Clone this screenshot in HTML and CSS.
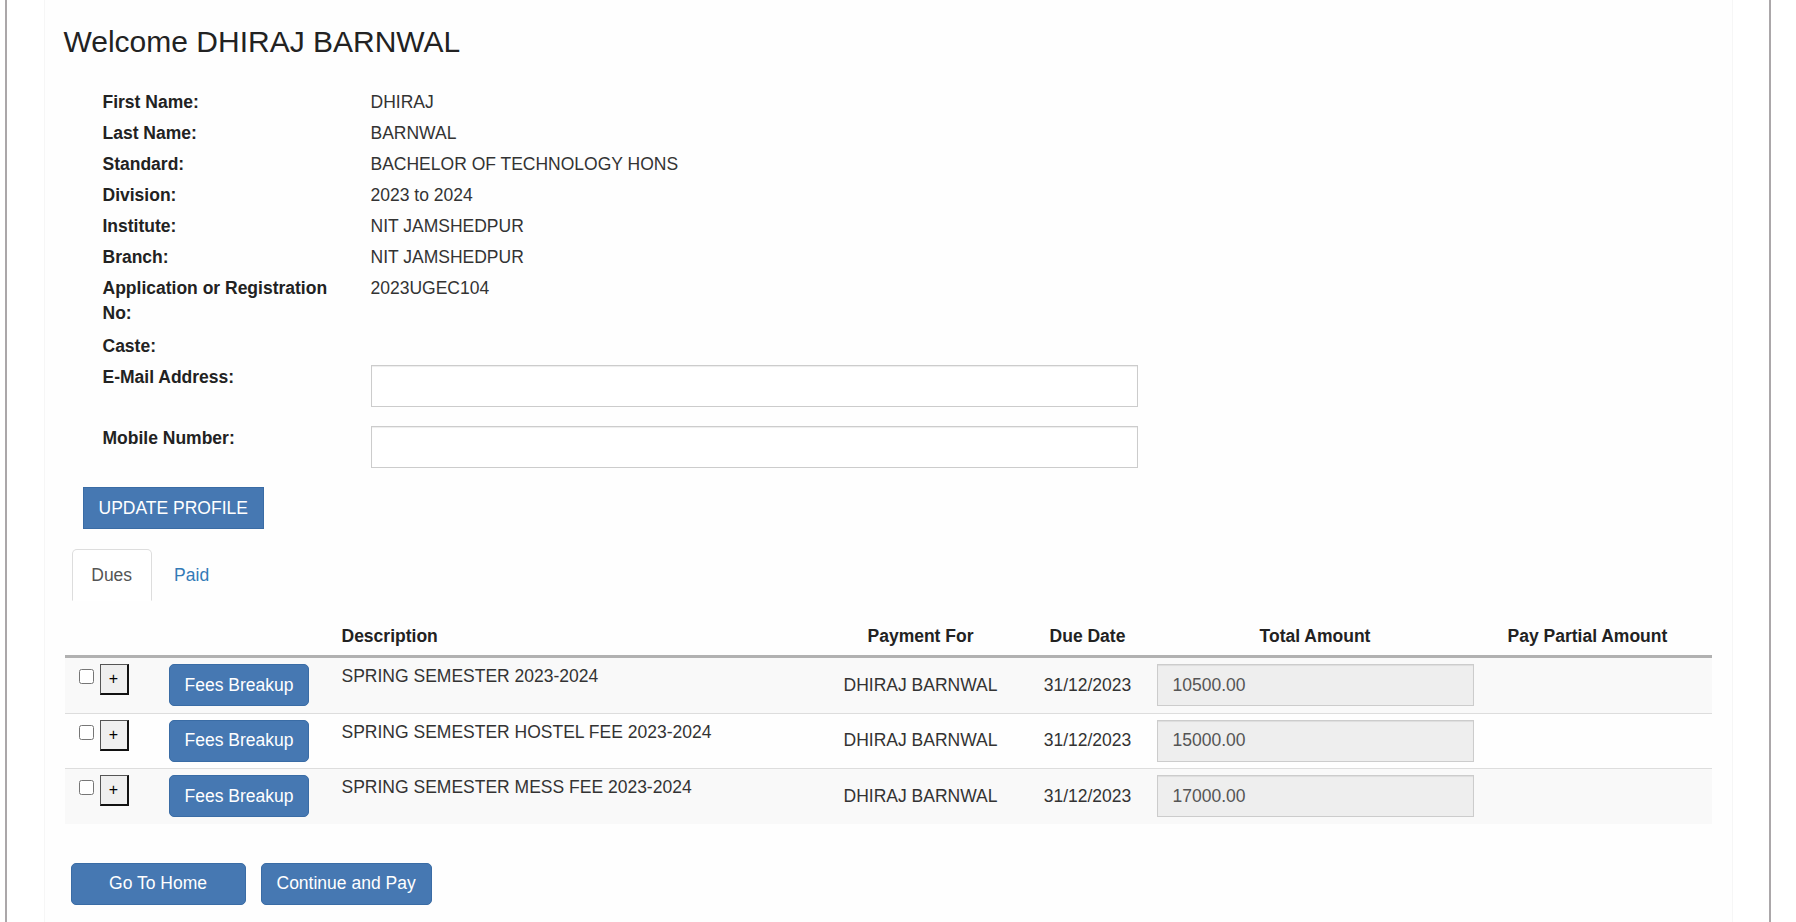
FILE: index.html
```html
<!DOCTYPE html>
<html lang="en">
<head>
<meta charset="utf-8">
<title>Welcome DHIRAJ BARNWAL</title>
<link rel="stylesheet" href="styles.css">
</head>
<body>
<div class="page">
  <div class="container">
    <h3 class="title">Welcome DHIRAJ BARNWAL</h3>

    <div class="profile">
      <div class="prow"><div class="plabel">First Name:</div><div class="pvalue">DHIRAJ</div></div>
      <div class="prow"><div class="plabel">Last Name:</div><div class="pvalue">BARNWAL</div></div>
      <div class="prow"><div class="plabel">Standard:</div><div class="pvalue">BACHELOR OF TECHNOLOGY HONS</div></div>
      <div class="prow"><div class="plabel">Division:</div><div class="pvalue">2023 to 2024</div></div>
      <div class="prow"><div class="plabel">Institute:</div><div class="pvalue">NIT JAMSHEDPUR</div></div>
      <div class="prow"><div class="plabel">Branch:</div><div class="pvalue">NIT JAMSHEDPUR</div></div>
      <div class="prow"><div class="plabel">Application or Registration No:</div><div class="pvalue">2023UGEC104</div></div>
      <div class="prow prow-gap"><div class="plabel">Caste:</div><div class="pvalue"></div></div>
      <div class="prow prow-input"><div class="plabel">E-Mail Address:</div><div class="pvalue"><input class="field" type="text"></div></div>
      <div class="prow prow-input"><div class="plabel">Mobile Number:</div><div class="pvalue"><input class="field" type="text"></div></div>
    </div>

    <button class="btn btn-square update-btn" type="button">UPDATE PROFILE</button>

    <ul class="tabs">
      <li class="tab active"><a href="#">Dues</a></li>
      <li class="tab"><a href="#">Paid</a></li>
    </ul>

    <table class="dues">
      <colgroup>
        <col class="w1"><col class="w2"><col class="w3"><col class="w4"><col class="w5"><col class="w6"><col class="w7">
      </colgroup>
      <thead>
        <tr>
          <th></th>
          <th></th>
          <th class="c-desc">Description</th>
          <th class="c-pay">Payment For</th>
          <th class="c-date">Due Date</th>
          <th class="c-total">Total Amount</th>
          <th class="c-partial">Pay Partial Amount</th>
        </tr>
      </thead>
      <tbody>
        <tr>
          <td><div class="sel"><input type="checkbox" class="chk"><button class="plus" type="button">+</button></div></td>
          <td><button class="btn" type="button">Fees Breakup</button></td>
          <td class="c-desc">SPRING SEMESTER 2023-2024</td>
          <td class="c-pay">DHIRAJ BARNWAL</td>
          <td class="c-date">31/12/2023</td>
          <td class="c-total"><input class="amount" type="text" value="10500.00" readonly></td>
          <td class="c-partial"></td>
        </tr>
        <tr>
          <td><div class="sel"><input type="checkbox" class="chk"><button class="plus" type="button">+</button></div></td>
          <td><button class="btn" type="button">Fees Breakup</button></td>
          <td class="c-desc">SPRING SEMESTER HOSTEL FEE 2023-2024</td>
          <td class="c-pay">DHIRAJ BARNWAL</td>
          <td class="c-date">31/12/2023</td>
          <td class="c-total"><input class="amount" type="text" value="15000.00" readonly></td>
          <td class="c-partial"></td>
        </tr>
        <tr>
          <td><div class="sel"><input type="checkbox" class="chk"><button class="plus" type="button">+</button></div></td>
          <td><button class="btn" type="button">Fees Breakup</button></td>
          <td class="c-desc">SPRING SEMESTER MESS FEE 2023-2024</td>
          <td class="c-pay">DHIRAJ BARNWAL</td>
          <td class="c-date">31/12/2023</td>
          <td class="c-total"><input class="amount" type="text" value="17000.00" readonly></td>
          <td class="c-partial"></td>
        </tr>
      </tbody>
    </table>

    <div class="actions">
      <button class="btn btn-home" type="button">Go To Home</button>
      <button class="btn" type="button">Continue and Pay</button>
    </div>
  </div>
</div>
</body>
</html>
```

FILE: styles.css
```css
* { box-sizing: border-box; }

html, body {
  margin: 0;
  padding: 0;
  background: #ffffff;
}

body {
  font-family: "Liberation Sans", Arial, sans-serif;
  font-size: 17.5px;
  line-height: 25px;
  color: #333333;
}

.page {
  margin: 0 25px 0 5px;
  min-height: 922px;
  border-left: 2px solid #aba7a9;
  border-right: 2px solid #aba7a9;
}

.container {
  display: flow-root;
  width: 1689px;
  margin: 0 auto;
  min-height: 922px;
  padding: 0 19px;
  background: #fefefe;
  border-left: 1px solid #f6f6f6;
  border-right: 1px solid #f6f6f6;
}

.title {
  margin: 25px 0 0;
  font-size: 30px;
  line-height: 33px;
  font-weight: 500;
  color: #222;
}

/* profile */
.profile {
  margin: 29px 0 0 29px;
  width: 1100px;
}

.prow {
  display: grid;
  grid-template-columns: 268px 1fr;
}

.plabel,
.pvalue {
  padding: 3px 10px;
}

.plabel {
  font-weight: bold;
  color: #222;
}

.prow-gap .plabel,
.prow-gap .pvalue {
  padding-top: 5px;
}

.prow-input .plabel,
.prow-input .pvalue {
  padding-bottom: 16px;
}

.field {
  display: block;
  width: 767px;
  height: 42px;
  margin: 0;
  padding: 7.5px 15px;
  border: 1px solid #cccccc;
  border-radius: 0;
  background: #fff;
  box-shadow: inset 0 1px 1px rgba(0, 0, 0, 0.075);
  font: inherit;
}

/* buttons */
.btn {
  display: inline-block;
  height: 42px;
  padding: 7.5px 15px;
  margin: 0;
  font-family: inherit;
  font-size: 17.5px;
  line-height: 25px;
  color: #ffffff;
  background: #4678b2;
  border: 1px solid #3a6ca5;
  border-radius: 5px;
  white-space: nowrap;
  cursor: pointer;
}

.btn-square { border-radius: 0; }

.update-btn {
  margin: 3px 0 0 19px;
}

/* tabs */
.tabs {
  list-style: none;
  display: flex;
  margin: 20px 0 0 8px;
  padding: 0;
}

.tab a {
  display: block;
  margin-right: 2.5px;
  padding: 12.5px 18.75px;
  border: 1px solid transparent;
  border-radius: 5px 5px 0 0;
  color: #337ab7;
  text-decoration: none;
}

.tab.active a {
  color: #555555;
  border-color: #dddddd #dddddd transparent;
  background: #fff;
}

/* dues table */
.dues {
  margin: 17px 0 0 1px;
  width: 1647px;
  border-collapse: collapse;
  table-layout: fixed;
}

.w1 { width: 94px; }
.w2 { width: 173px; }
.w3 { width: 502px; }
.w4 { width: 200px; }
.w5 { width: 113px; }
.w6 { width: 351px; }
.w7 { width: 214px; }

.dues th {
  padding: 6px 10px;
  text-align: left;
  vertical-align: bottom;
  font-weight: bold;
  color: #222;
  border-bottom: 3px solid #b1b1b1;
  white-space: nowrap;
}

.dues td {
  padding: 6px 10px 6.5px;
  vertical-align: top;
  border-top: 1px solid #dddddd;
}

.dues tbody tr:nth-child(odd) td { background: #f9f9f9; }

.dues .c-desc { padding-left: 10px; }

.dues .c-pay {
  text-align: center;
  padding-right: 36px;
  white-space: nowrap;
}

.dues .c-date {
  text-align: center;
  padding-right: 15px;
  white-space: nowrap;
}

.dues .c-total {
  text-align: center;
  padding-right: 24px;
}

.dues td.c-pay,
.dues td.c-date,
.dues td.c-total { vertical-align: middle; }

.dues td.c-total { text-align: left; }

.sel {
  display: flex;
  align-items: flex-start;
}

.chk {
  width: 15px;
  height: 15px;
  margin: 5px 6px 0 4px;
}

.plus {
  width: 29px;
  height: 31px;
  padding: 0;
  margin: 0;
  font-family: "Liberation Sans", Arial, sans-serif;
  font-size: 16px;
  line-height: 1;
  color: #000;
  background: #efefef;
  border-style: solid;
  border-width: 1.5px 2px 2px 1.5px;
  border-color: #555 #111 #111 #555;
  border-radius: 0;
}

.amount {
  display: block;
  width: 317px;
  height: 42px;
  margin: 0;
  padding: 7.5px 15px;
  font: inherit;
  color: #555555;
  background: #eeeeee;
  border: 1px solid #cccccc;
  border-radius: 0;
  box-shadow: inset 0 1px 1px rgba(0, 0, 0, 0.075);
}

/* footer actions */
.actions {
  display: flex;
  gap: 15px;
  margin: 39px 0 0 7px;
}

.btn-home { width: 175px; }
```
